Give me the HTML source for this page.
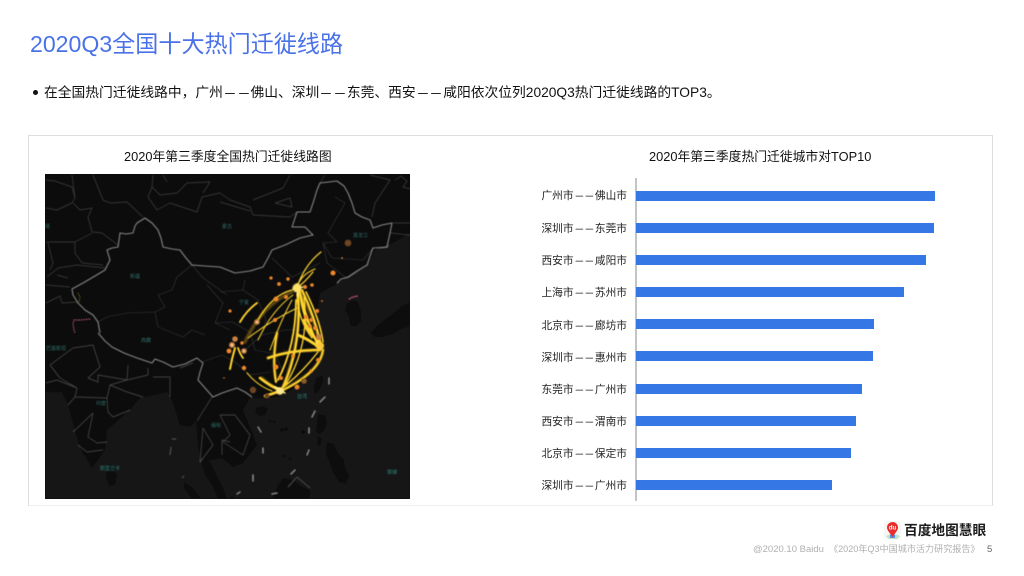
<!DOCTYPE html>
<html><head><meta charset="utf-8">
<style>
html,body{margin:0;padding:0;background:#fff}
body{width:1024px;height:576px;position:relative;overflow:hidden;font-family:"Liberation Sans","Noto Sans CJK SC",sans-serif;color:#111}
.a{position:absolute;white-space:nowrap}
.lb{position:absolute;left:500px;width:127px;text-align:right;font-size:10.7px;line-height:14px;color:#222;white-space:nowrap}
.bar{position:absolute;left:636px;height:10px;background:#3578e5}
i{font-style:normal;display:inline-block;width:1em;transform:scaleX(.7)}
</style></head><body>
<div class="a" style="left:30px;top:30px;font-size:23.1px;line-height:28px;color:#4a72e8">2020Q3全国十大热门迁徙线路</div>
<div class="a" style="left:33px;top:90px;width:5px;height:5px;border-radius:50%;background:#111"></div>
<div class="a" style="left:44px;top:84px;font-size:13.78px;line-height:18px">在全国热门迁徙线路中，广州<i>—</i><i>—</i>佛山、深圳<i>—</i><i>—</i>东莞、西安<i>—</i><i>—</i>咸阳依次位列2020Q3热门迁徙线路的TOP3。</div>
<div class="a" style="left:28px;top:135px;width:963px;height:369px;border:1px solid #ddd;border-bottom-color:#eee"></div>
<div class="a" style="left:124px;top:149px;font-size:12.8px;line-height:16px">2020年第三季度全国热门迁徙线路图</div>
<div class="a" style="left:649px;top:149px;font-size:12.8px;line-height:16px">2020年第三季度热门迁徙城市对TOP10</div>

<svg class="a" style="left:45px;top:174px" width="365" height="325" viewBox="45 174 365 325">
<defs>
<filter id="b" x="-5%" y="-5%" width="110%" height="110%"><feGaussianBlur stdDeviation="0.4"/></filter>
<filter id="g" x="-20%" y="-20%" width="140%" height="140%"><feGaussianBlur stdDeviation="0.8"/></filter>
</defs>
<rect x="45" y="174" width="365" height="325" fill="#0c0c0c"/>
<g filter="url(#b)">
<!-- sea -->
<path fill="#181818" d="M410 233L393 243 375 250 367 267 348 277 335 285 320 293 317 312 322 338 324 345 320 362 303 382 280 397 263 398 250 398 243 410 252 432 257 445 243 463 233 467 222 458 212 460 205 499 410 499Z"/>
<path fill="#181818" d="M45 392L62 392 68 405 80 448 92 468 105 450 107 430 130 410 140 398 167 392 172 400 180 425 190 427 196 421 198 442 200 462 212 460 215 499 45 499Z"/>
<!-- land in sea -->
<g fill="#0c0c0c">
<path d="M107 463l6 3 4 10-2 9-6 1-3-9z"/>
<path d="M256 408l7-2 5 3-3 6-6 1-4-4z"/>
<path d="M316 378l7-3 0 7-4 9-5 3 0-9z"/>
<path d="M318 414l7 1 2 8-3 8-5 3-3-2 1-10z"/>
<path d="M318 435l4 4-2 8-3-3z"/>
<path d="M327 442l7 2 4 9 6 7 1 7 4 9-3 8-7-2-6-10-3-8-4-10z"/>
<path d="M272 499l6-14 5-7 10 2 8 6 9 4 0 9z"/>
<path d="M347 303l7-3 4 2 3 9 0 10-5 6-6-2-1-8-4-7z"/>
<path d="M370 333l8-8 9-7 8-6 7-6 8-4 0 24-8 3-9 5-10 3-8 0z"/>
<path d="M200 458l10 4 7 14 7 14 3 9-9 0-6-14-7-10z"/>
<path d="M184 482l8 5 9 12-9 0-8-11z"/>
<path d="M228 499l4-3 3 3z"/>
</g>
<g fill="#101010"><circle cx="270" cy="421" r="1.500"/><circle cx="274" cy="422" r="1.500"/><circle cx="282" cy="430" r="2"/><circle cx="286" cy="429" r="2"/><circle cx="303" cy="432" r="2"/><circle cx="285" cy="456" r="1.500"/><circle cx="290" cy="459" r="1.500"/></g>
<!-- country borders -->
<g fill="none" stroke="#404040" stroke-width=".7" stroke-linejoin="round">
<path d="M46 180L55 181 72 187 75 198 72 203 57 210 46 208"/>
<path d="M72 175L75 198M93 175L103 200 110 203 127 202 143 217"/>
<path d="M73 203L80 210 92 208 88 217 92 232 102 233 118 245"/>
<path d="M46 242L75 242 92 233M75 242L75 253 82 263 103 265"/>
<path d="M48 243L53 263 50 270M105 268L77 265 58 268 47 277M46 285L70 287M57 275L68 278"/>
<path d="M46 303L60 296 62 303 78 302"/>
<path d="M153 175L152 187 148 197 157 210 170 203 197 212 202 197 220 193 230 200 250 207 253 215 290 217 297 212"/>
<path d="M152 187L160 195 177 193 187 183 210 182 203 193M167 182L163 175"/>
<path d="M253 200L283 188 290 175M275 203L290 198 292 207 275 203M220 202L250 211"/>
<path d="M325 175L320 183M370 175L390 180 375 203 372 217M393 223L410 223M390 233L410 235"/>
<path d="M395 180l6-4 6 5-4 6 7 2"/>
</g>
<g fill="none" stroke="#383838" stroke-width=".6" stroke-linejoin="round">
<path d="M192 265L177 277 172 290 158 295 165 307 155 312 127 313 107 317 98 322"/>
<path d="M155 312L158 327 183 337 192 330 205 335"/>
<path d="M192 265L203 278 227 295M207 285L223 303 215 323 230 330"/>
<path d="M335 197L345 203 328 233 337 242 323 243 332 258 363 260 373 248M323 243L327 263 345 277M320 263L292 277 272 258"/>
<path d="M220 292L243 290 245 280M243 290L258 300 266 320 262 335 285 330 315 330"/>
<path d="M215 323L232 322 250 332 255 350 275 354 283 372M202 362L222 355 235 362 250 375 270 372"/>
<path d="M245 350L262 335M283 350L296 352 312 352"/>
</g>
<g fill="none" stroke="#505050" stroke-width=".7" stroke-linejoin="round">
<path d="M73 348L93 345 100 367 88 378 98 382 98 375 127 380 148 375 148 368M128 365L127 380"/>
<path d="M73 348L50 365 60 378 77 388 75 397 68 405M75 397L107 398 110 385 127 380M77 388L57 380 46 383"/>
<path d="M110 385L127 392 143 397M107 398L108 412 113 417 130 410M93 413L73 432M93 413L88 437 97 443 107 442M78 445L87 452 103 450"/>
<path d="M153 377L170 377 170 397M180 368L193 363M197 421L212 397M203 428L200 462M200 462L213 445 203 428"/>
<path d="M220 415L235 415 250 435 243 455 223 442 230 435 220 415"/>
<path d="M230 442L222 440 222 455M288 487L297 477 310 488"/>
</g>
<!-- China main border -->
<path fill="none" stroke="#858585" stroke-width="1.100" stroke-linejoin="round" d="M100 333L98 322 93 315 85 310 78 303 73 295 72 289 83 283 95 276 105 270 110 260 107 250 112 248 118 247 120 233 126 234 133 233 135 226 137 223 145 218 152 223 158 230 161 238 163 247 172 249 180 250 186 258 192 265 205 266 220 267 235 273 250 271 263 267 268 258 272 250 285 245 300 238 313 235 305 227 292 227 295 218 297 212 310 212 314 200 317 190 320 183 337 181 344 186 348 193 352 203 355 213 362 217 370 220 373 228 382 225 392 223 390 233 387 247 373 248 370 256 367 265 357 271 348 277 341 279 337 283"/>
<path fill="none" stroke="#858585" stroke-width="1.100" stroke-linejoin="round" d="M98 333L105 341 112 347 124 353 137 358 152 363 155 359 163 362 173 367 185 364 197 358 203 363 200 372 198 380 205 388 213 397 222 393 237 388 245 392 252 397"/>
<!-- nine dash -->
<g stroke="#8f8f8f" stroke-width="1" stroke-linecap="round" fill="none">
<path d="M329 378l0 6M325 397l-5 5M315 411l-3 6M309 428l0 5M309 450l-2 5M295 470l-4 4M258 427l3 5M263 448l0 5M253 475l0 6M277 493l-5 1M240 492l-3 2"/>
</g>
<g stroke="#5c5c5c" stroke-width=".7" fill="none"><path d="M172 439l4 0M171 447l-1 8M182 478l2-2"/></g>
<!-- pink/orange dashes -->
<path fill="none" stroke="#d4688d" stroke-width=".9" stroke-dasharray="1.500 1" d="M90 319l-10 1-6 0-1 4 1 6 1 3"/>
<path fill="none" stroke="#b58a2d" stroke-width=".7" stroke-dasharray="1.200 1" d="M78 293l2 4 -1 5"/>
<path fill="none" stroke="#d4688d" stroke-width=".9" stroke-dasharray="1.500 1" d="M349 299l4-2 5-1"/>
<!-- map labels -->
<g font-size="5" fill="#2f6f68" font-family="'Liberation Sans','Noto Sans CJK SC',sans-serif">
<text x="130" y="278">新疆</text><text x="222" y="228">蒙古</text><text x="353" y="237">黑龙江</text><text x="239" y="304">宁夏</text><text x="45" y="228">塔</text><text x="46" y="350">巴基斯坦</text><text x="141" y="342">西藏</text><text x="96" y="405">印度</text><text x="100" y="470">斯里兰卡</text><text x="211" y="427">缅甸</text><text x="297" y="398">台湾</text><text x="387" y="474">菲律</text>
</g>
</g>
<!-- arcs -->
<g fill="none" stroke-linecap="round">
<g stroke="#b88a14" stroke-width="3.400" opacity=".45" filter="url(#g)">
<path d="M298 303Q300 345 283 387"/><path d="M300 292Q316 320 320 348"/><path d="M323 350Q320 372 282 390"/><path d="M320 350Q290 350 268 358"/><path d="M277 333Q272 360 276 380"/><path d="M262 378Q270 386 280 390"/><path d="M292 292Q262 305 245 342"/>
</g>
<g stroke="#ffd52e" filter="url(#b)">
<!-- north-east fan -->
<path d="M296 290Q304 265 321 252" stroke-width="1.200"/><path d="M297 288Q300 275 315 269" stroke-width="1.200"/><path d="M297 288Q305 282 313 272" stroke-width="1.200"/>
<!-- west long arcs -->
<path d="M292 290Q272 295 258 320" stroke-width="1.300"/><path d="M293 295Q272 310 258 340" stroke-width="1"/>
<path d="M240 322Q247 310 257 303" stroke-width="1.800"/>
<path d="M297 308Q272 320 248 338" stroke-width="1"/>
<path d="M292 300Q282 318 270 350" stroke-width="1"/>
<!-- Chengdu -->
<path d="M235 348Q232 358 230 369" stroke-width="2"/><path d="M238 348Q240 354 243 358" stroke-width="1.800"/>
<!-- Beijing to Shanghai -->
<path d="M299 288Q306 320 318 345" stroke-width="2.200"/><path d="M302 290Q314 315 321 345" stroke-width="2.200"/><path d="M306 292Q320 320 323 342" stroke-width="1.600"/><path d="M300 292Q302 312 308 322" stroke-width="2"/><path d="M297 294Q298 320 312 338" stroke-width="1.400"/>
<!-- Beijing to Guangzhou -->
<path d="M298 292Q302 345 283 387" stroke-width="2.200"/><path d="M296 300Q296 345 278 380" stroke-width="1.800"/><path d="M304 296Q310 345 286 384" stroke-width="1.300"/>
<path d="M277 333Q272 360 276 382" stroke-width="2"/>
<!-- Shanghai / Guangzhou -->
<path d="M323 350Q320 372 283 390" stroke-width="2"/><path d="M318 352Q300 375 281 389" stroke-width="1.400"/>
<path d="M320 350Q290 350 268 358" stroke-width="2.300"/>
<path d="M298 335Q310 340 320 348" stroke-width="3"/><path d="M304 320Q310 335 322 345" stroke-width="2.600"/>
<path d="M260 378Q270 386 280 390" stroke-width="2.600"/><path d="M265 396Q272 394 280 391" stroke-width="2.600"/>
<path d="M247 373Q258 386 272 391" stroke-width="1"/>
</g>
<g stroke="#fff0a0" stroke-width="1.400" filter="url(#b)">
<path d="M293 289L303 287"/><path d="M297 284L298 296"/><path d="M317 342L322 349"/><path d="M275 387L285 393"/>
</g>
</g>
<g filter="url(#g)">
<circle cx="297" cy="288" r="4.500" fill="#ffe26a"/><circle cx="320" cy="346" r="4" fill="#ffc93a"/><circle cx="280" cy="391" r="3.800" fill="#ffe98a"/>
</g>
<!-- dots -->
<g filter="url(#b)">
<g fill="#6e4422"><circle cx="348" cy="243" r="3.400"/><circle cx="253" cy="390" r="3.200"/><circle cx="304" cy="381" r="2.800" fill="#8a5a2a"/><circle cx="267" cy="396" r="2.500"/></g>
<g fill="#f0872a">
<circle cx="342" cy="258" r=".9"/><circle cx="333" cy="273" r="2.500"/><circle cx="271" cy="278" r="1.600"/><circle cx="279" cy="284" r="1.900"/><circle cx="288" cy="279" r="1.700"/><circle cx="312" cy="285" r="1.800"/><circle cx="305" cy="287" r="2"/><circle cx="276" cy="299" r="2.400"/><circle cx="286" cy="297" r="2"/><circle cx="322" cy="301" r=".9"/><circle cx="230" cy="311" r="1.600"/><circle cx="275" cy="320" r="2"/><circle cx="306" cy="317" r="2.200"/><circle cx="311" cy="320" r="2"/><circle cx="317" cy="311" r="2"/><circle cx="310" cy="326" r="1.800"/><circle cx="315" cy="328" r="2"/><circle cx="229" cy="351" r="2.400"/><circle cx="242" cy="343" r="1.700"/><circle cx="244" cy="368" r="2.200"/><circle cx="276" cy="367" r="2.500"/><circle cx="281" cy="378" r="2"/><circle cx="297" cy="387" r="2.500"/><circle cx="311" cy="371" r="1.500"/><circle cx="293" cy="356" r="1.800"/><circle cx="318" cy="360" r="2"/><circle cx="224" cy="378" r=".7"/></g>
<g fill="#c98143"><circle cx="257" cy="322" r="2.800"/><circle cx="235" cy="339" r="2.800"/><circle cx="232" cy="345" r="3"/><circle cx="244" cy="351" r="2.800"/><circle cx="319" cy="337" r="3"/></g>
<g fill="#ffd9a8"><circle cx="257" cy="322" r="1"/><circle cx="232" cy="345" r="1.200"/><circle cx="244" cy="351" r="1"/></g>
</g>
</svg>

<div class="a" style="left:635px;top:178px;width:2px;height:323px;background:#c4c4c4"></div>
<div class="lb" style="top:189px">广州市<i>—</i><i>—</i>佛山市</div><div class="bar" style="top:191px;width:299px"></div>
<div class="lb" style="top:222px">深圳市<i>—</i><i>—</i>东莞市</div><div class="bar" style="top:223px;width:298px"></div>
<div class="lb" style="top:254px">西安市<i>—</i><i>—</i>咸阳市</div><div class="bar" style="top:255px;width:290px"></div>
<div class="lb" style="top:286px">上海市<i>—</i><i>—</i>苏州市</div><div class="bar" style="top:287px;width:268px"></div>
<div class="lb" style="top:319px">北京市<i>—</i><i>—</i>廊坊市</div><div class="bar" style="top:319px;width:238px"></div>
<div class="lb" style="top:351px">深圳市<i>—</i><i>—</i>惠州市</div><div class="bar" style="top:351px;width:237px"></div>
<div class="lb" style="top:383px">东莞市<i>—</i><i>—</i>广州市</div><div class="bar" style="top:384px;width:226px"></div>
<div class="lb" style="top:415px">西安市<i>—</i><i>—</i>渭南市</div><div class="bar" style="top:416px;width:220px"></div>
<div class="lb" style="top:447px">北京市<i>—</i><i>—</i>保定市</div><div class="bar" style="top:448px;width:215px"></div>
<div class="lb" style="top:479px">深圳市<i>—</i><i>—</i>广州市</div><div class="bar" style="top:480px;width:196px"></div>

<svg class="a" style="left:883px;top:520px" width="20" height="21" viewBox="0 0 20 21">
<rect x="1" y="1" width="17" height="19" rx="3" fill="#f6f6f4"/>
<path d="M3 16l5-2 4 0 5 2-3 3H6z" fill="#bfe0c8"/>
<path d="M7 15l2.500-2 2.500 2 0 3H7z" fill="#4f8fe0"/>
<path d="M9.500 17C7 13 4 10.500 4 7.500a5.500 5.500 0 0 1 11 0C15 10.500 12 13 9.500 17Z" fill="#ea2b2b"/>
<text x="9.500" y="9.500" font-size="6" font-weight="bold" fill="#fff" text-anchor="middle" font-family="'Liberation Sans',sans-serif">du</text>
</svg>
<div class="a" style="left:904px;top:522px;font-size:13.7px;line-height:18px;font-weight:bold;color:#1c1c1c">百度地图慧眼</div>
<div class="a" style="left:753px;top:543px;font-size:9.5px;line-height:13px;color:#b0b0b0">@2020.10 Baidu</div>
<div class="a" style="left:829px;top:543px;font-size:9.1px;line-height:13px;color:#b0b0b0">《2020年Q3中国城市活力研究报告》</div>
<div class="a" style="left:987px;top:543px;width:5px;overflow:hidden;font-size:9.5px;line-height:13px;color:#666">5</div>
</body></html>
